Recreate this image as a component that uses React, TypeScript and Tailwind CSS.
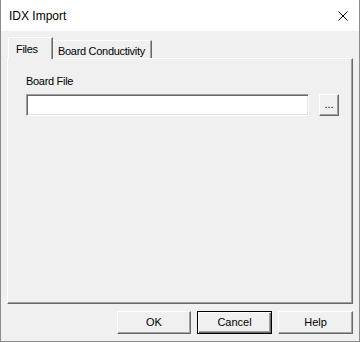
import React from "react";

const raised =
  "bg-[#f0f0f0] border border-t-white border-l-white border-r-[#696969] border-b-[#696969] shadow-[inset_-1px_-1px_#a0a0a0]";

export default function App() {
  return (
    <div className="w-[360px] h-[342px] flex flex-col bg-[#f0f0f0] border-x border-b border-[#8c8c8c] text-[11px] text-black" style={{ fontFamily: '"Liberation Sans", Arial, sans-serif' }}>
      <div className="h-[31px] bg-white flex items-center justify-between pl-[8px] pr-[10px] shrink-0">
        <span className="text-[12px] leading-none">IDX Import</span>
        <svg width="10" height="10" viewBox="0 0 10 10" className="mr-[1px]">
          <path d="M0.5 0.5 L9.5 9.5 M9.5 0.5 L0.5 9.5" stroke="#000" strokeWidth="1" fill="none" />
        </svg>
      </div>
      <div className="flex flex-col px-[6px] pt-[6px]">
        <div className="flex items-end h-[22px] relative z-10 -mb-[1px] pl-[1px] tracking-[-0.3px]">
          <div className="h-[22px] w-[45px] flex items-start pt-[3px] pl-[7px] bg-[#f0f0f0] border-t border-l border-white border-r border-r-[#696969] shadow-[inset_-1px_0_#a0a0a0]">
            Files
          </div>
          <div className="h-[18px] w-[99px] flex items-start pt-[2px] pl-[5px] bg-[#f0f0f0] border-t border-white border-r border-r-[#696969] shadow-[inset_-1px_0_#a0a0a0] mb-[1px] whitespace-nowrap">
            Board Conductivity
          </div>
        </div>
        <div className={"h-[246px] flex flex-col pl-[18px] pr-[12px] pt-[17px] " + raised}>
          <div className="leading-none tracking-[-0.3px]">Board File</div>
          <div className="flex mt-[7px] gap-[10px]">
            <div className="w-[283px] h-[22px] bg-white border border-t-[#a0a0a0] border-l-[#a0a0a0] border-r-white border-b-white shadow-[inset_1px_1px_#696969,inset_-1px_-1px_#e3e3e3]" />
            <div className={"w-[20px] h-[22px] flex items-center justify-center leading-none pb-[1px] " + raised}>...</div>
          </div>
        </div>
        <div className="flex justify-end gap-[6px] mt-[7px]">
          <div className={"w-[74px] h-[23px] flex items-center justify-center " + raised}>OK</div>
          <div className="w-[75px] h-[23px] flex items-center justify-center border border-black bg-[#f0f0f0] shadow-[inset_1px_1px_white,inset_-1px_-1px_#696969,inset_-2px_-2px_#a0a0a0]">Cancel</div>
          <div className={"w-[75px] h-[23px] flex items-center justify-center " + raised}>Help</div>
        </div>
      </div>
    </div>
  );
}
